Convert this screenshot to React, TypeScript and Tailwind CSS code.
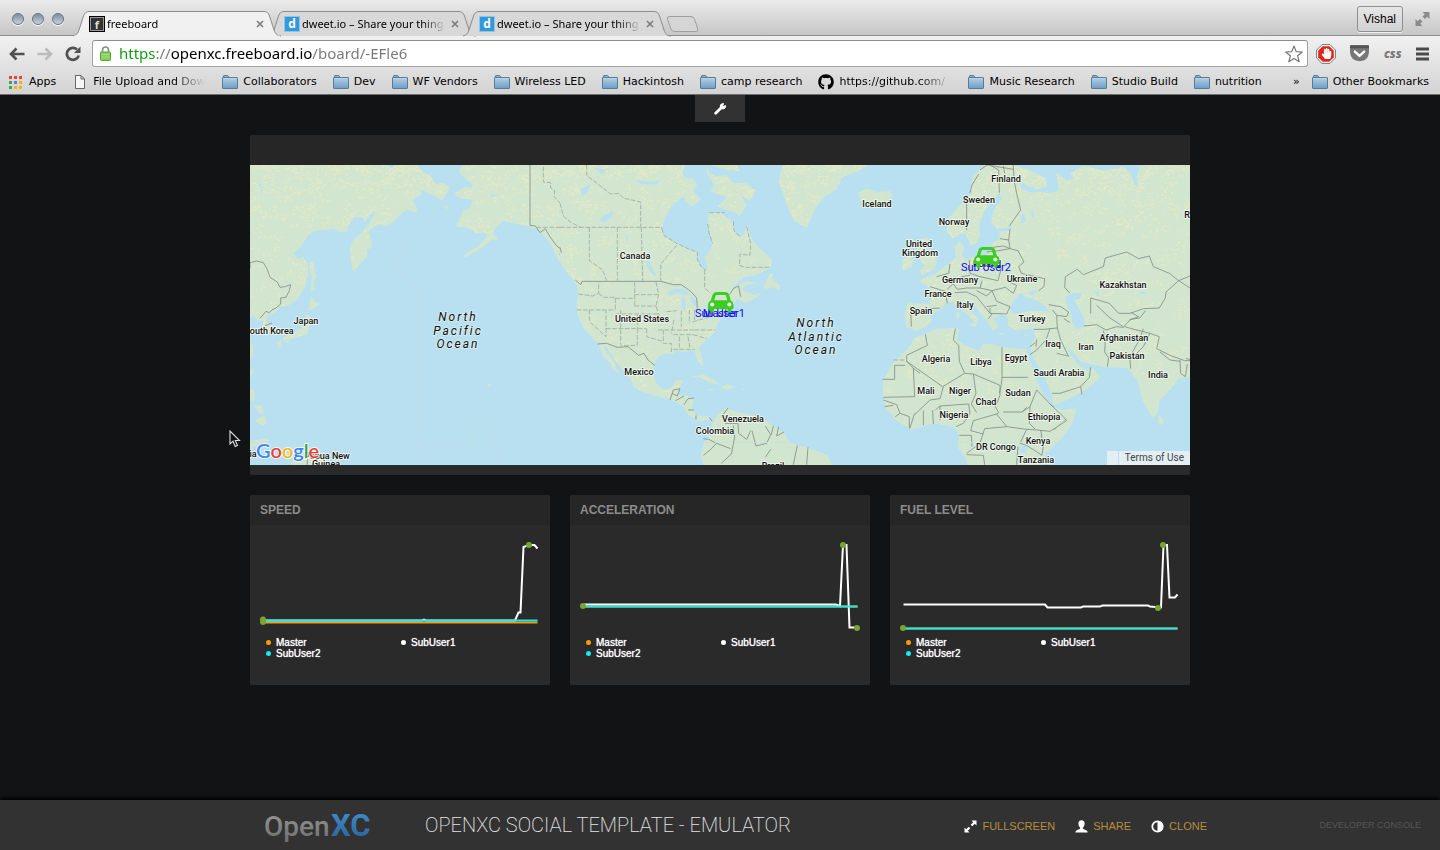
import React from "react";
import { FaGithub, FaHandPaper } from "react-icons/fa";

const LUCIDA = "font-['Noto_Sans',sans-serif]";

/* ---------- browser chrome ---------- */

function TrafficLight({ label }: { label: string }) {
  return (
    <button
      aria-label={label}
      className="size-3 rounded-full border border-[#6b7480] bg-gradient-to-b from-[#7f8c9b] to-[#c6d2de] shadow-[0_1px_0_#fff]"
    />
  );
}

function Tab({ title, active, icon }: { title: string; active?: boolean; icon: React.ReactNode }) {
  return (
    <div className={"relative -mr-[13px] h-[25px] w-[208px] " + (active ? "z-10" : "")}>
      <svg className="absolute inset-0" width="208" height="26" viewBox="0 0 208 26" aria-hidden="true">
        <path
          d="M0 25 C4 24 5 22 6 19 L10.500 5 Q12 .5 16 .5 H191 Q195 .5 196.500 5 L201 19 C202.500 23 204 25 208 25"
          fill={active ? "#f1f1f1" : "#d8d8d8"}
          stroke="#8d8d8d"
        />
        {active && <path d="M1 25.500 H207" stroke="#f1f1f1" strokeWidth="1.500" />}
      </svg>
      <div className="relative flex h-[26px] items-center gap-0.5 pr-[15px] pl-4">
        {icon}
        <button
          role="tab"
          aria-selected={!!active}
          className={"w-[146px] overflow-hidden text-left text-[11px] whitespace-nowrap text-black [mask-image:linear-gradient(to_right,#000_120px,transparent_144px)] " + LUCIDA}
        >
          {title}
        </button>
        <button aria-label={"Close " + title} className="flex size-3 items-center justify-center">
          <svg width="8" height="8" viewBox="0 0 8 8">
            <path d="M1 1 L7 7 M7 1 L1 7" stroke="#7b7b7b" strokeWidth="1.600" />
          </svg>
        </button>
      </div>
    </div>
  );
}

const dweetIcon = (
  <span className="flex size-4 shrink-0 items-center justify-center border border-[#8cc6ee] bg-[#3498db] font-['Open_Sans',sans-serif] text-[12px] leading-none font-bold text-white">
    d
  </span>
);
const freeboardIcon = (
  <span className="flex size-4 shrink-0 items-center justify-center border border-black bg-[#333] font-['Open_Sans',sans-serif] text-[11px] leading-none font-bold text-[#ddd] ring-1 ring-[#999] ring-inset">
    f
  </span>
);

function Folder() {
  return (
    <svg width="16" height="14" viewBox="0 0 16 14" className="shrink-0" aria-hidden="true">
      <defs>
        <linearGradient id="folder" x1="0" y1="0" x2="0" y2="1">
          <stop offset="0" stopColor="#b4d0e6" />
          <stop offset="1" stopColor="#6f9dc3" />
        </linearGradient>
      </defs>
      <path d="M1.500 3 V1 Q1.500 .5 2 .5 H5.500 Q6 .5 6.200 1 L6.800 2.500" fill="#8fb3cf" stroke="#5b7f9b" />
      <rect x=".5" y="2.500" width="15" height="11" rx=".5" fill="url(#folder)" stroke="#567c99" />
      <path d="M1.500 3.500 H14.500" stroke="#c4daea" strokeWidth=".6" />
    </svg>
  );
}

const APP_COLORS = ["#ea4335", "#ea4335", "#ea4335", "#34a853", "#4285f4", "#f4b400", "#34a853", "#f4b400", "#f4b400"];

function AppsIcon() {
  return (
    <svg width="15" height="13" viewBox="0 0 15 13" aria-hidden="true">
      {APP_COLORS.map((c, i) => (
        <rect key={i} x={(i % 3) * 5} y={Math.floor(i / 3) * 5} width="3" height="3" fill={c} />
      ))}
    </svg>
  );
}

function Bookmark({ icon, children, fade }: { icon?: React.ReactNode; children: string; fade?: boolean }) {
  return (
    <a href="#" className="flex shrink-0 items-center gap-[5px]">
      {icon ?? <Folder />}
      <span
        className={
          "whitespace-nowrap " +
          (fade ? "w-[113px] overflow-hidden [mask-image:linear-gradient(to_right,#000_80px,transparent_112px)]" : "")
        }
      >
        {children}
      </span>
    </a>
  );
}

function BrowserChrome() {
  return (
    <header className="border-b border-[#6e6e6e] bg-[#d6d6d6] text-black">
      <div className="flex h-9 items-end border-b border-[#8d8d8d] bg-gradient-to-b from-[#ebebeb] to-[#c6c6c6]">
        <div className="flex w-[73px] shrink-0 gap-2 self-center pt-0.5 pl-3">
          <TrafficLight label="Close window" />
          <TrafficLight label="Minimize window" />
          <TrafficLight label="Zoom window" />
        </div>
        <div role="tablist" className="-mb-px flex">
          <Tab title="freeboard" active icon={freeboardIcon} />
          <Tab title="dweet.io – Share your thing" icon={dweetIcon} />
          <Tab title="dweet.io – Share your thing" icon={dweetIcon} />
        </div>
        <button aria-label="New tab" className="mb-0.5 ml-[7px]">
          <svg width="34" height="17" viewBox="0 0 34 17">
            <path d="M4 .5 H26 Q28.500 .5 29.500 3 L32.500 12 Q33.500 15.500 31 15.500 H10 Q7 15.500 6 13 L2.500 3.500 Q1.500 .5 4 .5Z" fill="#d5d5d5" stroke="#a0a0a0" />
          </svg>
        </button>
        <div className="ml-auto flex items-center gap-3 self-center pt-0.5 pr-[10px]">
          <button className="h-[26px] rounded-[3px] border border-[#8f8f8f] bg-gradient-to-b from-[#e6e6e6] to-[#d2d2d2] px-[6px] font-['Liberation_Sans',sans-serif] text-[12px] shadow-[0_1px_0_#eee]">
            Vishal
          </button>
          <button aria-label="Enter full screen">
            <svg width="15" height="14" viewBox="0 0 14 14" fill="#8b8b8b">
              <path d="M7 0 H14 V7 L11.700 4.700 L9.500 7 L7 4.500 L9.300 2.300Z M0 7 L2.300 9.300 L4.500 7 L7 9.500 L4.700 11.700 L7 14 H0Z" />
            </svg>
          </button>
        </div>
      </div>
      <div className="bg-gradient-to-b from-[#f1f1f1] to-[#d3d3d3]">
        <div className="flex h-[35px] items-center">
          <div className="flex w-[92px] shrink-0 items-center gap-3 pl-[9px]">
            <button aria-label="Back">
              <svg width="16" height="14" viewBox="0 0 16 14">
                <path d="M15.500 7 H2.500 M7.500 1.500 L2 7 L7.500 12.500" fill="none" stroke="#505050" strokeWidth="2.600" />
              </svg>
            </button>
            <button aria-label="Forward">
              <svg width="16" height="14" viewBox="0 0 16 14">
                <path d="M.5 7 H13.500 M8.500 1.500 L14 7 L8.500 12.500" fill="none" stroke="#bcbcbc" strokeWidth="2.600" />
              </svg>
            </button>
            <button aria-label="Reload">
              <svg width="16" height="16" viewBox="0 0 16 16">
                <path d="M13.700 9.500 A6 6 0 1 1 12 3.500" fill="none" stroke="#505050" strokeWidth="2.700" />
                <path d="M15.500 .5 V7 H9Z" fill="#505050" />
              </svg>
            </button>
          </div>
          <div className="flex h-[27px] flex-1 items-center gap-2 rounded-[3px] border border-[#a3a3a3] border-t-[#8d8d8d] bg-white pr-1 pl-[7px]">
            <svg width="11" height="15" viewBox="0 0 11 15" className="shrink-0" aria-hidden="true">
              <path d="M2.500 7 V4 Q2.500 1 5.500 1 Q8.500 1 8.500 4 V7" fill="none" stroke="#8a8a8a" strokeWidth="1.600" />
              <rect x=".5" y="6" width="10" height="8.500" rx=".8" fill="#86cf5c" stroke="#5ba334" />
              <path d="M1.500 8.500 H9.500 M1.500 11 H9.500" stroke="#a5e07f" />
            </svg>
            <input
              aria-label="Address"
              defaultValue="https://openxc.freeboard.io/board/-EFle6"
              className={"min-w-0 flex-1 bg-[linear-gradient(to_right,#0a9a0a_38px,#777_38px,#777_52px,#000_52px,#000_193px,#777_193px)] bg-clip-text text-[15px] text-transparent caret-black outline-none " + LUCIDA}
            />
            <button aria-label="Bookmark this page">
              <svg width="18" height="18" viewBox="0 0 18 18">
                <path d="M9 1 L11.200 6.600 L17.300 7 L12.600 10.800 L14.200 16.800 L9 13.500 L3.800 16.800 L5.400 10.800 L.7 7 L6.800 6.600Z" fill="#fff" stroke="#777" strokeWidth="1.200" strokeLinejoin="round" />
              </svg>
            </button>
          </div>
          <div className="flex w-[132px] shrink-0 items-center justify-between pr-[11px] pl-2">
            <button aria-label="AdBlock" className="relative flex size-5 items-center justify-center">
              <svg width="20" height="20" viewBox="0 0 20 20">
                <path d="M6 .6 H14 L19.400 6 V14 L14 19.400 H6 L.6 14 V6Z" fill="#fff" stroke="#777" />
                <path d="M6.700 2.200 H13.300 L17.800 6.700 V13.300 L13.300 17.800 H6.700 L2.200 13.300 V6.700Z" fill="#e2231a" />
              </svg>
              <FaHandPaper className="absolute size-[11px] text-white" />
            </button>
            <button aria-label="Pocket">
              <svg width="19" height="17" viewBox="0 0 19.500 17">
                <path d="M0 1 Q0 0 1 0 H18.500 Q19.500 0 19.500 1 V7 Q19 16 10 16.500 Q.5 16 0 7Z" fill="#777" />
                <path d="M0 3 V1 Q0 0 1 0 H18.500 Q19.500 0 19.500 1 V3Z" fill="#555" />
                <path d="M5 6.500 L9.800 11 L14.500 6.500" fill="none" stroke="#fff" strokeWidth="2.400" strokeLinecap="round" strokeLinejoin="round" />
              </svg>
            </button>
            <button className="font-['Noto_Sans',sans-serif] text-[12px] leading-none font-extrabold text-[#777] italic">css</button>
            <button aria-label="Menu">
              <svg width="13" height="14" viewBox="0 0 13 14">
                <path d="M0 2 H13 M0 7 H13 M0 12 H13" stroke="#4a4a4a" strokeWidth="3" />
              </svg>
            </button>
          </div>
        </div>
        <nav aria-label="Bookmarks" className="flex h-[23px] items-center gap-4 overflow-hidden pr-[11px] pb-px pl-[9px] font-['DejaVu_Sans',sans-serif] text-[11px] leading-5">
          <Bookmark icon={<AppsIcon />}>Apps</Bookmark>
          <Bookmark
            fade
            icon={
              <svg width="16" height="14" viewBox="0 0 16 14" aria-hidden="true">
                <path d="M3.500 .5 H9 L12.500 4 V13.500 H3.500Z M9 .5 V4 H12.500" fill="#f5f5f5" stroke="#666" />
              </svg>
            }
          >
            File Upload and Down
          </Bookmark>
          <Bookmark>Collaborators</Bookmark>
          <Bookmark>Dev</Bookmark>
          <Bookmark>WF Vendors</Bookmark>
          <Bookmark>Wireless LED</Bookmark>
          <Bookmark>Hackintosh</Bookmark>
          <Bookmark>camp research</Bookmark>
          <Bookmark fade icon={<FaGithub className="size-4" />}>
            https://github.com/
          </Bookmark>
          <Bookmark>Music Research</Bookmark>
          <Bookmark>Studio Build</Bookmark>
          <Bookmark>nutrition</Bookmark>
          <div className="ml-auto flex items-center gap-3">
            <button aria-label="More bookmarks">»</button>
            <Bookmark>Other Bookmarks</Bookmark>
          </div>
        </nav>
      </div>
    </header>
  );
}

/* ---------- world map ---------- */

type Region = { id: string; x: number; land: string; lakes: string; borders: string; states: string; blotches: number };

// Each region is drawn on a grid three times finer than the map.
const REGIONS: Region[] = [
  {
    id: "pacific",
    x: 0,
    blotches: 620,
    land:
      "M0 15 H410 L425 25 L435 15 H500 L520 35 L545 50 L556 72 L580 68 L600 85 L590 100 L575 122 L560 110 L530 98 L512 85 L515 102 L488 120 L500 145 L502 160 L485 152 L468 150 L450 165 L425 190 L405 198 L390 193 L368 202 L355 215 L362 238 L366 262 L350 270 L352 288 L335 305 L322 322 L310 335 L303 310 L300 262 L310 240 L338 215 L352 198 L372 165 L370 155 L345 185 L335 170 L312 172 L300 190 L288 215 L268 216 L250 206 L192 214 L175 225 L155 258 L130 280 L145 298 L160 292 L172 310 L175 345 L165 380 L142 418 L112 438 L90 440 L78 455 L50 470 L48 482 L66 500 L60 520 L42 522 L36 500 L40 484 L22 480 L8 466 L0 474Z " +
      "M180 305 L192 302 L193 330 L200 355 L190 362 L193 390 L183 396 L185 350 L177 322Z M178 445 L182 408 L195 425 L210 432 L190 446 L172 454Z M168 462 L180 466 L180 490 L172 522 L150 528 L122 538 L98 542 L100 532 L130 520 L148 508 L160 498Z M82 545 L94 541 L95 560 L85 564Z M102 544 L120 541 L112 551Z M0 545 L10 560 L8 590 L0 600Z M0 628 L10 625 L6 648 L0 655Z M0 685 L13 690 L15 715 L8 726 L0 718Z M12 735 L34 738 L42 762 L26 758Z M14 780 L44 766 L50 788 L40 797 L20 786Z M0 842 L50 836 L60 846 L20 856 L0 868Z M128 900 L190 886 L230 900 L260 914 H120Z " +
      "M640 15 L625 35 L645 55 L668 72 L664 85 L645 80 L630 90 L612 102 L630 114 L668 120 L660 145 L640 150 L632 172 L618 200 L640 202 L662 206 L676 220 L700 218 L712 224 L700 244 L680 262 L655 275 L640 290 L650 290 L686 270 L712 252 L722 238 L740 240 L742 232 L728 222 L736 206 L758 182 L780 188 L806 192 L842 200 L862 208 L880 226 L900 250 L912 270 L924 300 L940 318 L960 352 V15Z M715 670 L722 674 L716 682Z M575 134 L598 142 L592 148Z",
    lakes: "M25 65 L34 95 L58 130 L64 134 L40 105 L32 70Z M720 100 L745 108 L722 112Z",
    borders:
      "M0 325 V308 L20 303 L40 308 L52 328 L60 352 L82 366 L90 382 L104 380 L122 374 L118 392 L108 412 L92 414 L92 432 L78 444 L66 450 L58 458 L48 454 L30 475 M45 497 L66 489 M840 15 V196 L856 198 L870 218 L886 206 L900 230 L920 258 L934 268 L930 284 M172 890 V914",
    states: "M880 20 V66 L902 68 V84 L914 92 L912 110 L932 130 L940 160 L960 180 M860 202 H960",
  },
  {
    id: "america",
    x: 310,
    blotches: 620,
    land:
      "M0 15 H376 L366 38 L374 52 L400 58 L412 75 L398 92 L368 112 L342 130 L318 165 L305 205 L312 226 L350 250 L388 268 L412 276 L412 300 L425 322 L438 330 L442 320 L434 290 L450 272 L458 250 L448 222 L443 192 L447 157 L482 158 L498 172 L520 184 L522 212 L540 230 L552 222 L562 196 L572 230 L592 258 L622 285 L636 302 L630 325 L590 345 L552 352 L522 378 L512 398 L532 376 L558 364 L592 369 L558 376 L546 388 L560 396 L582 404 L602 398 L596 408 L556 432 L548 424 L530 418 L504 452 L486 478 L472 492 L466 516 L440 540 L416 564 L428 598 L430 620 L418 610 L404 575 L390 570 L375 576 L350 571 L340 581 L315 581 L295 590 L284 606 L280 642 L290 672 L312 690 L334 684 L350 660 L370 662 L356 690 L352 705 L372 706 L402 714 L396 745 L408 766 L432 770 L450 768 L457 786 L440 778 L425 785 L402 774 L384 764 L372 742 L350 728 L330 718 L298 710 L258 700 L220 682 L213 658 L190 632 L164 600 L140 562 L128 560 L138 572 L152 592 L165 612 L178 643 L162 630 L148 606 L130 592 L118 556 L98 535 L74 510 L54 470 L50 430 L55 400 L50 372 L22 336 L0 306Z " +
      "M440 15 L446 38 L468 50 L500 45 L520 68 L560 70 L588 92 L570 122 L542 106 L560 134 L540 168 L520 155 L472 140 L488 125 L500 110 L452 96 L462 72 L440 40Z M610 382 L628 345 L640 338 L636 358 L660 376 L658 392 L640 382 L612 388Z M370 98 L398 92 L424 118 L400 138 L378 128Z M450 15 H530 L540 34 L500 30 Z " +
      "M668 15 L655 62 L666 92 L682 140 L704 184 L740 204 L752 178 L768 142 L792 112 L830 88 L846 52 L890 36 L925 15Z M395 650 L430 643 L462 660 L478 674 L450 668 L420 652Z M482 684 L498 672 L527 682 L502 690Z M440 688 L460 686 L458 692Z M545 686 H556 V690 H545Z " +
      "M478 758 L500 744 L530 756 L562 762 L600 770 L640 798 L672 820 L690 848 L732 860 L772 874 L802 886 L817 915 H432 L422 888 L432 848 L455 820 L456 790Z",
    lakes:
      "M320 400 L345 386 L372 388 L392 402 L372 404 L350 400 L330 408Z M366 412 L374 412 L378 448 L370 452 L364 436Z M388 410 L402 412 L412 438 L400 436Z M400 452 L424 444 L420 452Z M430 438 L448 434 L444 442Z M130 168 L160 152 L156 170 L136 186 L116 182Z M60 88 L92 72 L84 96 L66 108Z M258 298 L268 306 L290 348 L280 346 L262 322Z M196 210 L204 236 L200 250Z M100 22 L140 30 L126 42Z M230 60 L280 66 L300 58 L290 74 L240 72Z",
    borders:
      "M0 262 L4 278 M46 360 L62 374 L66 364 H302 L340 374 H364 L392 394 L410 414 L412 446 M508 404 L522 384 L536 378 L542 410 M112 552 L140 550 L172 562 L204 560 L236 586 L252 580 L264 600 L284 616 M330 720 L340 690 L360 686 L352 708 L336 700 M346 722 L372 708 M372 734 L384 716 L402 714 M384 750 H402 M408 766 V778 M448 772 L456 784 M504 744 L486 768 L496 790 H534 L536 820 L560 838 L572 812 M520 796 L524 832 L514 882 L484 910 M430 836 L446 838 L470 850 L512 866 M430 886 L450 870 L470 850 M576 812 L588 858 L620 850 L632 824 L616 798 M640 798 L634 824 M656 800 L650 828 L672 816 M632 868 L616 892 M700 914 L712 856 M744 862 L740 914",
    states:
      "M80 15 V46 L152 102 L178 100 L190 114 L242 126 V202 M0 202 H306 M88 202 V302 L128 330 L140 362 M172 202 V362 M244 202 L248 362 M350 256 L302 312 V364 M434 330 V384 L452 400 M448 158 H494 M305 205 L312 226 L350 250 L388 268 L412 276 L412 300 L425 322 L438 330 M443 192 L448 222 L458 250 M520 184 L522 212 L540 230 M560 200 L572 250 L570 286 L540 282 L538 316 L556 322 H628 M0 130 L10 168 L34 188 L62 202 M55 402 L98 408 L116 400 V366 M116 400 L130 412 H166 V452 M50 450 H166 M88 450 V484 L138 530 V452 M224 366 V438 M166 415 H224 M224 404 H294 M224 438 H290 M166 462 H294 M182 452 V556 M232 462 V506 M138 506 H260 M232 506 V556 L182 558 M288 366 L296 404 L288 438 L302 478 M260 506 V530 L308 544 M294 510 H404 M310 510 V550 H334 V580 M340 524 H400 M342 480 L334 520 M364 452 V500 M388 450 V490 M320 455 L350 452 M358 530 V570 M384 530 L390 566 M340 568 H404 M404 510 L466 510 M400 524 L440 536 M398 486 L450 470 M430 460 H480 M404 450 V480",
  },
  {
    id: "eurasia",
    x: 620,
    blotches: 680,
    land:
      "M345 15 L325 32 L308 52 L300 100 L262 145 L232 178 L230 215 L248 236 L275 220 L290 225 L302 258 L322 248 L330 226 L328 190 L345 150 L368 122 L388 98 L396 115 L370 150 L364 190 L382 206 L425 200 L420 212 L388 214 L390 236 L366 250 L368 268 L346 284 L312 288 L290 300 L276 288 L282 262 L270 244 L254 262 L258 294 L240 308 L212 330 L190 344 L170 350 L146 364 L180 382 L185 402 L178 432 L112 430 L104 462 L108 500 L138 512 L168 500 L186 484 L180 464 L212 448 L228 430 L248 424 L270 446 L292 462 L318 492 L326 480 L302 450 L290 424 L308 428 L330 458 L350 482 L368 512 L386 500 L370 476 L392 464 L412 468 L414 498 L440 512 L492 505 L496 530 L480 562 L492 600 L520 640 L540 690 L552 736 L600 716 L660 680 L692 652 L670 625 L652 632 L624 612 L602 586 L594 566 L606 574 L632 604 L668 614 L706 622 L742 622 L774 624 L786 642 L804 664 L818 722 L850 776 L864 754 L868 722 L902 688 L926 656 L960 650 V15 H812 L800 50 L806 80 L792 72 L782 40 L760 20 L700 32 L640 18 L602 40 L610 56 L592 62 L560 40 L566 92 L540 98 L478 96 L448 82 L456 70 L500 88 L532 80 L528 56 L480 30 L432 15Z " +
      "M148 240 L176 232 L170 258 L186 276 L202 304 L194 326 L156 346 L150 332 L166 316 L148 300 L156 284 L142 262Z M98 300 L120 284 L132 300 L124 322 L98 332Z M-35 98 L-10 85 L20 96 L60 93 L68 112 L42 135 L0 140 L-25 128Z M125 160 L130 163 L125 166Z M260 455 L268 456 L267 478 L258 472Z M258 440 L266 438 L264 450Z M296 492 L320 490 L316 502Z M384 520 L408 520 L396 525Z M462 526 L476 522 L470 532Z M866 766 L878 774 L882 788 L872 796 L864 786Z " +
      "M166 522 L200 506 L250 504 L266 508 L262 540 L290 558 L325 572 L340 552 L364 552 L396 562 L468 568 L480 602 L500 660 L520 706 L552 742 L578 750 L620 745 L604 798 L562 850 L526 880 L515 915 H292 L285 890 L264 864 L268 826 L250 802 L192 790 L122 810 L80 782 L46 742 L38 702 L40 660 L72 604 L112 568 L136 532Z",
    lakes:
      "M420 444 L436 416 L452 400 L468 412 L492 416 L528 440 L536 454 L482 452 L440 462 L424 458Z M472 398 L502 390 L490 408Z M586 412 L610 398 L636 400 L630 416 L612 420 L624 440 L640 470 L646 500 L620 508 L606 486 L604 460 L592 440Z M484 596 L470 575 L476 570 L486 584Z M448 860 L474 856 L468 880 L450 876Z M450 170 L462 160 L468 182 L456 190Z M480 150 L492 158 L488 176Z M674 396 L690 392 L684 412Z M436 880 L442 910 L446 910 L440 880Z M808 396 L830 394 L828 402 L810 402Z",
    borders:
      "M360 15 L386 30 L388 98 M330 30 L352 15 L430 28 M300 100 L306 75 L326 42 M290 105 V210 M400 18 L404 40 M430 15 L432 60 L440 100 L452 150 L418 198 M420 208 L416 240 L390 236 M416 240 L420 266 L400 258 L368 262 M350 276 L386 272 L420 266 L444 272 L462 306 L446 320 L454 340 L496 350 L524 356 L522 380 L506 392 M298 300 L300 340 L330 350 L384 362 L392 332 L384 300 M240 312 L236 340 L200 350 M232 388 L254 366 L276 350 L300 346 M250 372 L262 388 L290 384 L330 384 L336 362 M180 380 L226 394 L232 430 M254 398 L290 396 L320 410 M320 392 L350 408 L366 392 L330 384 M366 392 L406 382 L430 400 L440 376 L410 362 M320 410 L360 460 L410 462 L420 440 L380 424 L366 392 M350 440 L380 436 M356 476 L366 462 M360 444 V460 M172 446 L210 444 M122 440 L124 500 M536 434 L572 440 L596 456 L590 470 L560 466 L548 450 M560 466 L562 504 L572 540 L596 590 M562 504 L520 508 H492 M540 506 L528 540 L500 570 L480 584 M500 538 L498 560 M582 476 L600 488 M480 560 L496 548 " +
      "M600 400 L584 382 L586 350 L622 328 L640 344 L700 320 L706 294 L770 276 L806 296 L838 288 L850 320 L898 340 L926 362 L888 396 L886 414 L868 444 L820 446 L780 460 L746 460 L718 430 L662 414 V460 M642 498 L680 494 L708 510 L740 500 L760 502 L782 478 L810 474 L826 452 M680 436 L720 474 L760 500 M700 512 L706 540 L704 576 L716 594 L712 620 M716 594 L780 590 L808 540 L820 506 M782 626 L780 600 L820 560 L840 520 L868 530 L860 566 L900 586 L944 602 H960 M840 520 L792 508 L764 500 M784 458 L806 470 L778 480 M926 362 L960 348 M926 362 L960 384 M930 600 L932 640 L946 650 L952 612 M948 596 L960 598 M870 576 L900 600 L930 604 M546 700 L570 700 L632 680 L658 652 L662 622 M632 680 L636 704 M560 580 L594 588 " +
      "M166 522 L172 556 L110 586 V604 L218 680 L284 640 L268 604 L266 556 L250 540 L256 506 M110 604 L130 624 L134 710 L40 712 M74 616 L106 616 M74 616 V658 H38 M128 624 L150 640 M396 562 V652 H474 M396 652 L394 674 L388 700 M284 640 L310 642 L390 676 V706 L376 740 L386 758 L380 762 L310 782 L302 812 M310 642 L318 700 L304 732 L320 758 M220 680 L210 716 L180 720 L134 764 M210 738 L296 732 L300 760 L280 790 L258 800 M134 760 L120 804 M160 752 V796 M188 750 L190 792 M196 750 L210 738 V780 M40 720 L80 734 L90 760 L76 770 M44 740 L70 736 M90 760 L118 770 V806 M380 762 L410 800 L470 808 L500 810 L540 814 L590 782 M456 756 L480 740 L500 690 L540 732 L552 742 M480 740 L478 790 L496 808 M470 808 L450 850 L470 856 L516 886 M410 800 L344 806 L330 850 L290 880 M302 812 L340 822 M268 826 H304 L306 860 M512 810 L520 860 L516 886 M444 860 L440 914 M400 756 L456 756 L470 742 M290 884 L340 886 L344 914 M540 732 L580 770 L590 782",
    states: "M70 600 H110 M590 775 L550 812",
  },
];

function blotchPath(seed: number, count: number): string {
  let s = seed;
  const next = () => {
    s = (s * 1664525 + 1013904223) % 4294967296;
    return s / 4294967296;
  };
  let d = "";
  for (let i = 0; i < count; i++) {
    const cx = next() * 960;
    const cy = 15 + Math.pow(next(), 1.8) * 700;
    const n = 3 + Math.floor(next() * 8);
    for (let j = 0; j < n; j++) {
      const x = Math.round(cx + (next() + next() - 1) * 22);
      const y = Math.round(cy + (next() + next() - 1) * 18);
      const w = 3 + Math.floor(next() * 5);
      const h = 3 + Math.floor(next() * 3);
      d += `M${x} ${y}h${w}v${h}h-${w}z`;
    }
  }
  return d;
}

const COUNTRY_LABELS: [string, number, number][] = [
  ["Japan", 306, 321], ["Canada", 635, 256], ["United States", 642, 319], ["Mexico", 639, 372],
  ["Venezuela", 743, 419], ["Colombia", 715, 431], ["Brazil", 773, 466], ["Iceland", 877, 204],
  ["Finland", 1006, 179], ["Sweden", 979, 200], ["Norway", 954, 222], ["United", 919, 244],
  ["Kingdom", 920, 253], ["Poland", 987, 264], ["Germany", 960, 280], ["Ukraine", 1022, 279],
  ["France", 938, 294], ["Italy", 965, 305], ["Spain", 921, 311], ["Turkey", 1032, 319],
  ["Kazakhstan", 1123, 285], ["Iraq", 1053, 344], ["Iran", 1086, 347], ["Afghanistan", 1124, 338],
  ["Pakistan", 1127, 356], ["India", 1158, 375], ["Algeria", 936, 359], ["Libya", 981, 362],
  ["Egypt", 1016, 358], ["Saudi Arabia", 1059, 373], ["Mali", 926, 391], ["Niger", 960, 391],
  ["Chad", 986, 402], ["Sudan", 1018, 393], ["Nigeria", 954, 415], ["Ethiopia", 1044, 417],
  ["Kenya", 1038, 441], ["DR Congo", 996, 447], ["Tanzania", 1036, 460], ["South Korea", 269, 331],
  ["ia", 253, 454], ["Papua New", 327, 456], ["Guinea", 326, 464], ["R", 1187, 215],
];

const OCEAN_LABELS: [string, number, number][] = [
  ["North", 457, 317], ["Pacific", 457, 331], ["Ocean", 457, 344],
  ["North", 815, 323], ["Atlantic", 815, 337], ["Ocean", 815, 350],
];

function Car({ x, y }: { x: number; y: number }) {
  return (
    <g transform={`translate(${x} ${y})`}>
      <path
        fillRule="evenodd"
        fill="#3ccc22"
        d="M8.500 0 H17.500 Q20.300 0 21 2.500 L22.800 8.600 Q25.500 10 25.500 13 V17 H23.500 V18.500 Q23.500 20.700 21.500 20.700 Q19.500 20.700 19.500 18.500 V17 H6 V18.500 Q6 20.700 4 20.700 Q2 20.700 2 18.500 V17 H0 V13 Q0 10 2.700 8.600 L4.700 2.500 Q5.500 0 8.500 0Z M8.600 3 Q7.800 3 7.500 4 L6.200 8.300 H19.300 L18.100 4 Q17.900 3 17 3Z"
      />
      <circle cx="4.200" cy="12.600" r="2" fill="#e9f7e4" />
      <circle cx="21.300" cy="12.600" r="2" fill="#e9f7e4" />
    </g>
  );
}

function WorldMap() {
  return (
    <div className="relative h-[300px] overflow-hidden bg-[#b9e0f0]">
      <svg width="940" height="300" viewBox="0 0 940 300" role="img" aria-label="World map with vehicle positions" className="mx-auto block">
        {REGIONS.map((r, i) => (
          <g key={r.id} transform={`translate(${r.x} -5) scale(.33333)`}>
            <clipPath id={"land-" + r.id}>
              <path d={r.land} />
            </clipPath>
            <path d={r.land} fill="#d2e6cf" />
            <path d={blotchPath(77 + i * 31, r.blotches)} fill="#e5eac6" fillOpacity=".75" clipPath={`url(#land-${r.id})`} />
            <path d={r.lakes} fill="#b9e0f0" />
            <path d={r.borders} fill="none" stroke="#84918a" strokeWidth="2.600" />
            <path d={r.states} fill="none" stroke="#9aa89d" strokeWidth="2.400" strokeDasharray="14 5" />
          </g>
        ))}
        <path d="M197 5 L201 12 L200 28 L190 39 L141 98 L146 104 L169 120 V281 H226 V268 H218 V258 H236 L254 300" fill="none" stroke="#c3dfdd" strokeDasharray="5 3" />
        <path d="M0 277.500 H940" stroke="#bfe0e6" strokeDasharray="3 2" />
        <g textAnchor="middle" stroke="#f3f8f0" strokeOpacity=".85" strokeWidth="2" strokeLinejoin="round" paintOrder="stroke" fill="#111" className="font-[Roboto,sans-serif]">
          {COUNTRY_LABELS.map(([t, x, y]) => (
            <text key={t + x} x={x - 250} y={y - 162} className="text-[9px] font-medium">
              {t}
            </text>
          ))}
          {OCEAN_LABELS.map(([t, x, y]) => (
            <text key={t + y} x={x - 249} y={y - 161} strokeOpacity=".5" className="text-[12px] tracking-[2px] italic">
              {t}
            </text>
          ))}
        </g>
        <g textAnchor="middle" fill="#0a0af0" className="font-[Roboto,sans-serif] text-[11px]">
          <text x="470" y="152">Sub User1</text>
          <text x="470" y="152">Master</text>
          <text x="736" y="106">Sub User2</text>
        </g>
        <Car x={458} y={127} />
        <Car x={724} y={82} />
      </svg>
      <a href="#" aria-label="Google" className="absolute bottom-0 left-1.5">
        <svg width="66" height="28" viewBox="0 0 66 28">
          <text x="0" y="21" stroke="#fff" strokeOpacity=".8" strokeWidth="2" paintOrder="stroke" className="font-[Lato,sans-serif] text-[20px] font-semibold">
            <tspan fill="#4285f4">G</tspan>
            <tspan fill="#ea4335">o</tspan>
            <tspan fill="#fbbc05">o</tspan>
            <tspan fill="#4285f4">g</tspan>
            <tspan fill="#34a853">l</tspan>
            <tspan fill="#ea4335">e</tspan>
          </text>
        </svg>
      </a>
      <div className="absolute right-0 bottom-0 flex h-3.5 gap-px">
        <span className="w-[11px] bg-[#f5f5f5]/70" />
        <a href="#" className="bg-[#f5f5f5]/70 px-1.5 font-[Roboto,sans-serif] text-[10px] leading-[14px] text-[#444]">
          Terms of Use
        </a>
      </div>
    </div>
  );
}

/* ---------- sparkline widgets ---------- */

type Chart = { title: string; lines: { d: string; color: string }[]; dots: [number, number][] };

const CHARTS: Chart[] = [
  {
    title: "SPEED",
    lines: [
      { d: "M12 97.500 H287.500", color: "#ff9900" },
      { d: "M12 95.500 H172 L174 94.500 L176 95.500 H265 L268.500 87.500 H270.500 L273.500 22 L279 20 H284.500 L287.500 23.500", color: "#ffffff" },
      { d: "M12 95.500 H287.500", color: "#18e8f2" },
    ],
    dots: [[13, 94.5], [13, 97], [279, 20]],
  },
  {
    title: "ACCELERATION",
    lines: [
      { d: "M12 81.500 H287.500", color: "#ff9900" },
      { d: "M14 79.500 H266 L270 81 L273 20 H276.500 L279.500 102.500 H287", color: "#ffffff" },
      { d: "M12 81.500 H287.500", color: "#18e8f2" },
    ],
    dots: [[13, 81], [273, 20], [287, 103]],
  },
  {
    title: "FUEL LEVEL",
    lines: [
      { d: "M12 103.500 H287.500", color: "#ff9900" },
      { d: "M13.500 79.500 H155 L157.500 82.500 H191 L193 81.500 H210 L212.500 80.500 H258 L260 81.500 L271 82.500 L273.500 20 H277 L279.500 72.500 H285 L287.500 69.500", color: "#ffffff" },
      { d: "M12 103.500 H287.500", color: "#18e8f2" },
    ],
    dots: [[13, 103], [268, 83], [273, 20]],
  },
];

function LegendItem({ dot, children }: { dot: string; children: string }) {
  return (
    <li className="flex items-center gap-[5px]">
      <span className={"size-[5px] rounded-full " + dot} />
      {children}
    </li>
  );
}

function ChartCard({ chart }: { chart: Chart }) {
  return (
    <section className="bg-[#2a2a2a] pb-[26px]">
      <h2 className="h-[30px] bg-[#262626] px-2.5 text-[12px] leading-[30px] font-bold text-[#8c8c8c]">{chart.title}</h2>
      <svg viewBox="0 0 300 112" className="block w-full" role="img" aria-label={chart.title + " history"}>
        {chart.lines.map((l) => (
          <path key={l.color} d={l.d} fill="none" stroke={l.color} strokeWidth="2" />
        ))}
        {chart.dots.map(([x, y]) => (
          <circle key={x + "-" + y} cx={x} cy={y} r="3" fill="#78a62f" />
        ))}
      </svg>
      <ul className="grid grid-cols-2 pr-[14px] pl-4 text-[10px] leading-[11px] text-white [text-shadow:0_0_1px_#fff]">
        <LegendItem dot="bg-[#ff9900]">Master</LegendItem>
        <LegendItem dot="bg-white">SubUser1</LegendItem>
        <LegendItem dot="bg-[#18e8f2]">SubUser2</LegendItem>
      </ul>
    </section>
  );
}

/* ---------- footer ---------- */

function FooterLink({ icon, children }: { icon: React.ReactNode; children: string }) {
  return (
    <a href="#" className="flex items-center gap-[5px] text-[11px] text-[#b98d3c]">
      {icon}
      {children}
    </a>
  );
}

function Footer() {
  return (
    <footer className="grid h-[50px] grid-cols-[1fr_minmax(0,974px)_1fr] items-center bg-[#323232] shadow-[0_-2px_4px_#000]">
      <div className="col-start-2 flex items-center pl-8">
        <svg width="108" height="40" viewBox="0 0 108 40" role="img" aria-label="OpenXC" className="shrink-0">
          <defs>
            <linearGradient id="logo-grey" x1="0" y1="0" x2="0" y2="1">
              <stop offset="0" stopColor="#9a9a9a" />
              <stop offset="1" stopColor="#6c6c6c" />
            </linearGradient>
            <linearGradient id="logo-blue" x1="0" y1="0" x2="0" y2="1">
              <stop offset="0.200" stopColor="#3f87c6" />
              <stop offset="1" stopColor="#255f93" />
            </linearGradient>
          </defs>
          <text x="-1" y="31" fill="url(#logo-grey)" className="font-[Roboto,sans-serif] text-[28px] font-medium">Open</text>
          <text x="66" y="31" fill="url(#logo-blue)" className="font-[Roboto,sans-serif] text-[31px] font-bold">XC</text>
        </svg>
        <h1 className="ml-[52px] font-[Roboto,sans-serif] text-[20px] leading-5 font-extralight whitespace-nowrap text-[#e4e4e4]">
          OPENXC SOCIAL TEMPLATE - EMULATOR
        </h1>
        <nav className="ml-auto flex gap-5 pt-0.5">
          <FooterLink
            icon={
              <svg width="13" height="13" viewBox="0 0 13 13" fill="#fff">
                <path d="M7.500 .5 H12.500 V5.500 L10.800 3.800 L8.300 6.300 L6.700 4.700 L9.200 2.200Z M.5 7.500 L2.200 9.200 L4.700 6.700 L6.300 8.300 L3.800 10.800 L5.500 12.500 H.5Z" />
              </svg>
            }
          >
            FULLSCREEN
          </FooterLink>
          <FooterLink
            icon={
              <svg width="13" height="13" viewBox="0 0 13 13" fill="#fff">
                <path d="M6.500 .3 Q9.800 .3 9.600 3.800 Q9.500 6.300 8 7.600 V8.800 L12 10.800 Q12.600 11.200 12.600 12.500 H.4 Q.4 11.200 1 10.800 L5 8.800 V7.600 Q3.500 6.300 3.400 3.800 Q3.200 .3 6.500 .3Z" />
              </svg>
            }
          >
            SHARE
          </FooterLink>
          <FooterLink
            icon={
              <svg width="13" height="13" viewBox="0 0 13 13">
                <circle cx="6.500" cy="6.500" r="5.200" fill="none" stroke="#fff" strokeWidth="1.800" />
                <path d="M6.500 1 A5.500 5.500 0 0 1 6.500 12Z" fill="#fff" />
              </svg>
            }
          >
            CLONE
          </FooterLink>
        </nav>
      </div>
      <a href="#" className="justify-self-end pt-0.5 pr-[19px] text-[9px] whitespace-nowrap text-[#555]">
        DEVELOPER CONSOLE
      </a>
    </footer>
  );
}

export default function App() {
  return (
    <div className="relative flex min-h-screen flex-col overflow-hidden bg-[#111314] font-['Liberation_Sans',Arial,sans-serif]">
      <BrowserChrome />
      <main className="flex flex-1 flex-col items-center pb-8">
        <button aria-label="Settings" className="flex h-[27px] w-[50px] items-center justify-center bg-[#323232]">
          <svg width="13" height="13" viewBox="0 0 13 13" fill="none" stroke="#fff">
            <path d="M1.700 11.300 L8 5" strokeWidth="2.800" strokeLinecap="round" />
            <path d="M9.600 1.600 A2.700 2.700 0 1 0 11.600 3.600 L9.400 4.300 L8.800 3.700Z" fill="#fff" strokeWidth="1" strokeLinejoin="round" />
            <path d="M10.200 3 L12.500 .7" stroke="#323232" strokeWidth="1.600" />
          </svg>
        </button>
        <div className="mt-[13px] flex w-full max-w-[940px] flex-col gap-5">
          <section aria-label="Map" className="bg-[#2a2a2a] pb-2.5">
            <div className="h-[30px] bg-[#262626]" />
            <WorldMap />
          </section>
          <div className="grid grid-cols-3 gap-5">
            {CHARTS.map((c) => (
              <ChartCard key={c.title} chart={c} />
            ))}
          </div>
        </div>
      </main>
      <Footer />
      <svg width="12" height="18" viewBox="0 0 12 18" aria-hidden="true" className="absolute top-[430px] left-[229px]">
        <path d="M1 1 V14 L4 11.200 L6.200 16.500 L8.500 15.500 L6.300 10.500 H10.500Z" fill="#111" stroke="#ddd" strokeWidth="1.100" />
      </svg>
    </div>
  );
}
